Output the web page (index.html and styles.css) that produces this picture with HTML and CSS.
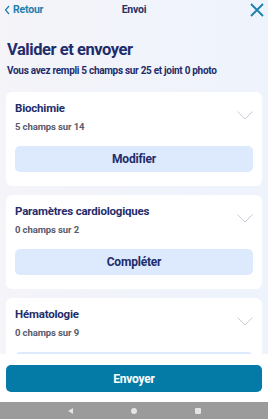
FILE: index.html
```html
<!DOCTYPE html>
<html lang="fr">
<head>
<meta charset="utf-8">
<link rel="stylesheet" href="styles.css">
</head>
<body>
<div class="screen">
  <header class="topbar">
    <a class="back"><svg width="6" height="10" viewBox="0 0 6 10"><path d="M5 1 L1.5 5 L5 9" fill="none" stroke="#1a7fae" stroke-width="1.2"/></svg><span>Retour</span></a>
    <div class="topbar-title">Envoi</div>
    <svg class="close" width="14" height="14" viewBox="0 0 14 14"><path d="M1 1 L13 13 M13 1 L1 13" stroke="#1a7fae" stroke-width="1.8" fill="none"/></svg>
  </header>
  <main class="content">
    <h1 class="title">Valider et envoyer</h1>
    <p class="subtitle">Vous avez rempli 5 champs sur 25 et joint 0 photo</p>
    <section class="card">
      <div class="card-head">
        <div>
          <h2 class="card-title">Biochimie</h2>
          <p class="card-sub">5 champs sur 14</p>
        </div>
        <svg class="chev" width="16" height="9" viewBox="0 0 16 9"><path d="M0.5 0.5 L8 8 L15.5 0.5" fill="none" stroke="#c9cbd6" stroke-width="1"/></svg>
      </div>
      <button class="card-btn">Modifier</button>
    </section>
    <section class="card">
      <div class="card-head">
        <div>
          <h2 class="card-title">Paramètres cardiologiques</h2>
          <p class="card-sub">0 champs sur 2</p>
        </div>
        <svg class="chev" width="16" height="9" viewBox="0 0 16 9"><path d="M0.5 0.5 L8 8 L15.5 0.5" fill="none" stroke="#c9cbd6" stroke-width="1"/></svg>
      </div>
      <button class="card-btn">Compléter</button>
    </section>
    <section class="card">
      <div class="card-head">
        <div>
          <h2 class="card-title">Hématologie</h2>
          <p class="card-sub">0 champs sur 9</p>
        </div>
        <svg class="chev" width="16" height="9" viewBox="0 0 16 9"><path d="M0.5 0.5 L8 8 L15.5 0.5" fill="none" stroke="#c9cbd6" stroke-width="1"/></svg>
      </div>
      <button class="card-btn">Compléter</button>
    </section>
  </main>
  <footer class="footer">
    <button class="send">Envoyer</button>
  </footer>
  <nav class="navbar">
    <span class="nav-back"></span>
    <span class="nav-home"></span>
    <span class="nav-recent"></span>
  </nav>
</div>
</body>
</html>
```
FILE: styles.css
```css
* { box-sizing: border-box; }
html, body { margin: 0; padding: 0; }
body {
  font-family: Roboto, "Liberation Sans", sans-serif;
  width: 268px;
  height: 419px;
  overflow: hidden;
}
.screen {
  width: 268px;
  height: 419px;
  display: flex;
  flex-direction: column;
  background: linear-gradient(90deg, #f4f4f9 0%, #eef3fc 100%);
  position: relative;
}
.topbar {
  height: 19px;
  flex: none;
  display: flex;
  align-items: center;
  justify-content: space-between;
  padding: 0 4px 0 4px;
  position: relative;
}
.back {
  display: flex;
  align-items: center;
  gap: 3px;
  color: #1a7fae;
  font-size: 10.5px;
  font-weight: 700;
  letter-spacing: -0.2px;
}
.topbar-title {
  position: absolute;
  left: 0; right: 0;
  text-align: center;
  font-size: 10.5px;
  font-weight: 700;
  color: #2a3262;
  letter-spacing: -0.2px;
  pointer-events: none;
}
.content {
  flex: 1;
  overflow: hidden;
  padding: 21px 6px 0 6px;
  min-height: 0;
}
.title {
  margin: 0 0 0 1px;
  font-size: 16.5px;
  font-weight: 700;
  color: #1f2d6a;
  line-height: 20px;
  letter-spacing: -0.45px;
}
.subtitle {
  margin: 5px 0 0 1px;
  font-size: 10px;
  font-weight: 700;
  color: #1f2d6a;
  line-height: 12px;
  letter-spacing: -0.3px;
}
.card {
  background: #fff;
  border-radius: 6px;
  margin-top: 9px;
  padding: 9px 9px 14px 9px;
}
.subtitle + .card { margin-top: 15px; }
.card-head {
  display: flex;
  justify-content: space-between;
  align-items: flex-start;
}
.card-title {
  margin: 0;
  font-size: 11.5px;
  font-weight: 700;
  color: #1f2d6a;
  line-height: 14px;
  letter-spacing: -0.2px;
}
.card-sub {
  margin: 6px 0 0 0;
  font-size: 9.5px;
  font-weight: 700;
  color: #585b6d;
  line-height: 12px;
  letter-spacing: -0.1px;
}
.chev { margin-top: 10px; flex: none; }
.card-btn {
  display: block;
  width: 100%;
  margin-top: 13px;
  height: 26px;
  border: none;
  border-radius: 5px;
  background: #dde9fc;
  color: #1f2d6a;
  font-family: inherit;
  font-size: 12px;
  font-weight: 700;
  letter-spacing: -0.2px;
}
.footer {
  flex: none;
  height: 48px;
  background: #fff;
  padding: 11px 6px 0 6px;
}
.send {
  display: block;
  width: 100%;
  height: 27px;
  border: none;
  border-radius: 5px;
  background: #047ba7;
  color: #fff;
  font-family: inherit;
  font-size: 12px;
  font-weight: 700;
  letter-spacing: -0.2px;
}
.navbar {
  flex: none;
  height: 17px;
  background: #9b9b9b;
  display: flex;
  align-items: center;
  justify-content: center;
  gap: 58px;
}
.nav-back {
  width: 0; height: 0;
  border-top: 3px solid transparent;
  border-bottom: 3px solid transparent;
  border-right: 5px solid #e4e4e4;
}
.nav-home {
  width: 6px; height: 6px;
  border-radius: 50%;
  background: #e4e4e4;
}
.nav-recent {
  width: 6px; height: 6px;
  background: #e4e4e4;
  border-radius: 1px;
}
```
